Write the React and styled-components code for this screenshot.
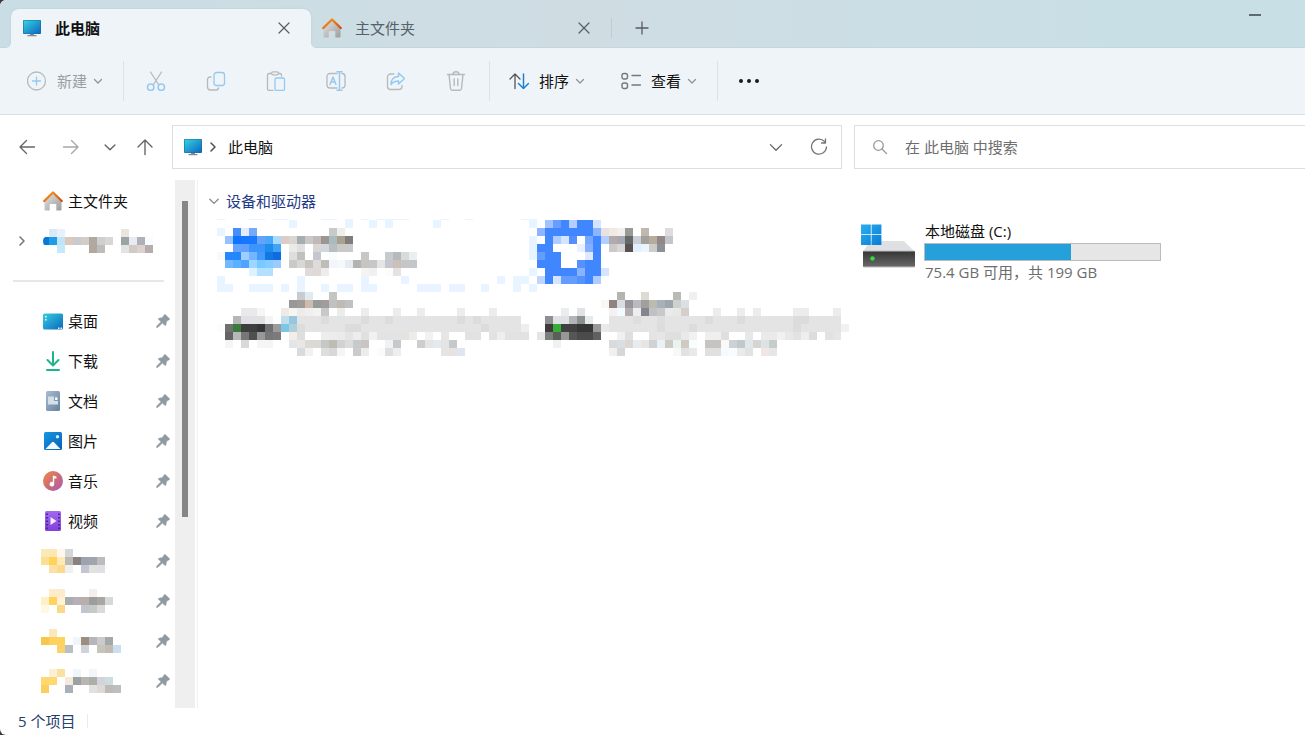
import React from 'react'
import styled, { createGlobalStyle } from 'styled-components'

const GlobalStyle = createGlobalStyle`
    * {
        box-sizing: border-box;
    }
    body {
        margin: 0;
        background: #3a3a3a;
        color: #111;
        font-family: "Open Sans", "Noto Sans CJK SC", sans-serif;
        font-size: 15px;
        line-height: 20px;
    }
    button, input {
        font: inherit;
        color: inherit;
        border: 0;
        padding: 0;
        margin: 0;
        background: none;
    }
    svg {
        display: block;
        flex: none;
    }
`;

const Window = styled.div`
    display: flex;
    flex-direction: column;
    min-height: 100vh;
    background: #fff;
    border-radius: 6px 0 0 6px;
    overflow: hidden;
`;

const TitleBar = styled.header`
    display: flex;
    align-items: flex-end;
    height: 48px;
    padding-left: 11px;
    background: linear-gradient(90deg, #c9dde4, #cfdde3 45%, #c9dfe6 85%);
    box-shadow: inset 0 -1px #c3d6de;
`;

const Tab = styled.div`
    position: relative;
    display: flex;
    align-items: center;
    width: 300px;
    height: 39px;
    padding: 0 21px 2px 11px;
    border-radius: 8px 8px 0 0;
    color: ${p => p.$active ? '#111' : '#55606a'};
    font-weight: ${p => p.$active ? 700 : 400};
    background: ${p => p.$active ? '#eff4f8' : 'transparent'};
    box-shadow: ${p => p.$active ? '0 0 2px #b4cad4' : 'none'};
    clip-path: inset(-3px -4px 0 -4px);
    &::before, &::after {
        content: ${p => p.$active ? '""' : 'none'};
        position: absolute;
        bottom: 0;
        width: 4px;
        height: 4px;
    }
    &::before {
        left: -4px;
        background: radial-gradient(circle at 0 0, transparent 3px, #eff4f8 4px);
    }
    &::after {
        right: -4px;
        background: radial-gradient(circle at 100% 0, transparent 3px, #eff4f8 4px);
    }
`;

const TabName = styled.span`
    flex: 1;
    margin-left: 13px;
`;

const IconButton = styled.button`
    display: flex;
    flex: none;
    align-items: center;
    justify-content: center;
    width: ${p => p.$width || 12}px;
    height: ${p => p.$height || 24}px;
`;

const TabDivider = styled.span`
    width: 1px;
    height: 20px;
    margin-bottom: 10px;
    background: #bccdd4;
`;

const NewTab = styled(IconButton)`
    width: 60px;
    height: 39px;
    padding-bottom: 2px;
`;

const Minimize = styled(IconButton)`
    align-self: flex-start;
    width: 46px;
    height: 30px;
    margin-left: auto;
    margin-right: 27px;
`;

const Toolbar = styled.div`
    display: flex;
    align-items: center;
    height: 67px;
    padding-left: 27px;
    background: #eff4f8;
    border-bottom: 1px solid #d7e1e7;
`;

const Command = styled.button`
    display: flex;
    align-items: center;
    height: 40px;
    margin-right: ${p => p.$after}px;
    color: ${p => p.disabled ? '#9a9fa3' : '#111'};
`;

const CommandName = styled.span`
    margin: 0 6px 0 10px;
`;

const EditCommands = styled.div`
    display: flex;
    margin-right: 3px;
`;

const Divider = styled.span`
    width: 1px;
    height: 40px;
    margin-right: ${p => p.$after}px;
    background: #dde2e6;
`;

const AddressRow = styled.div`
    display: grid;
    grid-template-columns: 160px minmax(0, 670fr) minmax(0, 451fr);
    column-gap: 12px;
    align-items: center;
    height: 64px;
`;

const Nav = styled.nav`
    display: flex;
    padding-left: 7px;
`;

const AddressBox = styled.div`
    display: flex;
    align-items: center;
    height: 44px;
    padding: 0 12px 0 10px;
    border: 1px solid #dedede;
`;

const Crumb = styled.button`
    flex: 1;
    margin-left: 5px;
    text-align: left;
`;

const SearchBox = styled.label`
    display: flex;
    align-items: center;
    height: 44px;
    padding-left: 17px;
    border: 1px solid #dedede;
    border-right: 0;
`;

const SearchInput = styled.input`
    flex: 1;
    min-width: 0;
    margin-left: 17px;
    outline: 0;
    &::placeholder {
        color: #6e6e6e;
        opacity: 1;
    }
`;

const Main = styled.div`
    display: flex;
    flex: 1;
    padding-top: 1px;
`;

const Sidebar = styled.aside`
    width: 175px;
`;

const PlaceList = styled.ul`
    list-style: none;
    margin: 0;
    padding: 1px 0 0;
`;

const Place = styled.a`
    display: flex;
    align-items: center;
    height: 40px;
    padding: 0 5px 0 16px;
    color: #111;
    text-decoration: none;
`;

const Expander = styled.span`
    width: 25px;
`;

const PlaceIcon = styled.span`
    display: flex;
    justify-content: center;
    width: 24px;
    margin-right: 3px;
`;

const PlaceName = styled.span`
    flex: 1;
    padding-bottom: 1px;
`;

const Rule = styled.hr`
    height: 2px;
    margin: 19px 11px 18px 13px;
    border: 0;
    background: #e7e7e7;
`;

const ScrollTrack = styled.div`
    width: 20px;
    padding: 21px 7px 0;
    background: #efefef;
`;

const ScrollThumb = styled.div`
    height: 316px;
    background: #868686;
`;

const Content = styled.main`
    flex: 1;
    min-width: 0;
    margin-left: 2px;
    padding-left: 19px;
    border-left: 1px solid #f1f1f1;
`;

const GroupTitle = styled.button`
    display: flex;
    align-items: center;
    gap: 6px;
    height: 40px;
    margin-left: -9px;
    padding: 2px 0 0;
    color: #1f3a86;
`;

const Tiles = styled.div`
    display: grid;
    grid-template-columns: repeat(auto-fill, 320px);
`;

const Tile = styled.div`
    display: flex;
    height: 72px;
`;

const Drive = styled(Tile)`
    padding: 2px 16px 0 2px;
`;

const DriveInfo = styled.div`
    flex: 1;
    margin-left: 10px;
`;

const DriveName = styled.div`
    padding-bottom: 3px;
    line-height: 18px;
`;

const Usage = styled.div`
    height: 18px;
    margin: 0 0 2px -1px;
    border: 1px solid #bcbcbc;
    background: #e6e6e6;
`;

const UsageFill = styled.div`
    height: 100%;
    background: #26a0da;
`;

const FreeSpace = styled.div`
    line-height: 18px;
    color: #6d6d6d;
`;

const StatusBar = styled.footer`
    display: flex;
    align-items: center;
    gap: 12px;
    height: 27px;
    padding: 0 0 1px 18px;
    color: #24406b;
`;

const StatusDivider = styled.span`
    width: 1px;
    height: 14px;
    background: #ececec;
`;

const MosaicSvg = styled.svg`
    overflow: visible;
`;

// each row is a list of "column:color" or "first-last:color" cells
const parseRow = (row) => row.split(' ').filter(Boolean).map(cell => {
    const [cols, color] = cell.split(':');
    const [first, last = first] = cols.split('-').map(Number);
    return { x: first, w: last - first + 1, color: '#' + color };
});

function Mosaic({ rows, cols, edge = '' }) {
    return (
        <MosaicSvg width={cols * 8} height={rows.length * 8} viewBox={`0 0 ${cols} ${rows.length}`} shapeRendering="crispEdges" aria-hidden="true">
            {parseRow(edge).map((c, i) => (
                <rect key={'edge-' + i} x={c.x} y="-0.125" width={c.w} height="0.125" fill={c.color} />
            ))}
            {rows.map((row, y) => parseRow(row).map((c, i) => (
                <rect key={y + '-' + i} x={c.x} y={y} width={c.w} height="1" fill={c.color} />
            )))}
        </MosaicSvg>
    );
}

const cloudMosaic = [
    '1:dbe8f5 2:e6f1f9 10:eae5df',
    '1:1f9de6 2:c0e4fa 3:dbc9bc 4:c9cad0 5:d3cccb 6:b1a9a0 7:d0cfcf 8:dbd6d6 10:9ca3a3 11:e7ebf4 12:b0b1b4 13:f8fcff',
    '2:c5e8fb 6:b0a79d 7:bebcbd 10:e3e2e5 11:d2cbc3 12:dad2cf 13:b7adad',
];

const folderMosaics = [
    [
        '0:fce9b9 1:fce6b4 2:fdf7ec 3:d3d6d6',
        '0:fddf90 1:ffd25a 2:ffe9b6 3:bcb9b5 4:898180 5:9da2b0 6:a2a5ab 7:bbbcc0',
        '1:fbe0a8 2:fbda8a 3:f0f0f1 5:c3c6cf 6:e0e2df 7:e0e0e2',
    ],
    [
        '1-2:fceccb 6:f4efea',
        '0:fff0c9 1:ffd35c 2:fff2d6 3:a9adac 4:b5b0b8 5:baaea8 6:9c9d9f 7:aaa7a2 8:d7d8d8',
        '0:fff8e5 2:fbd98a 5:c2c5cb 6:c7c8c8 7:d8dbd8',
    ],
    [
        '1:fbe9bb',
        '0:f8c64a 1-2:ffd25e 4:eff5fa 5:9c8d7e 6:b5b5ba 7:cccbc9 8:a2a9a8',
        '2:fad16b 3:b8bec4 5:d0d3d9 7:c4c5bc 8:c0bcb2 9:cae0f1',
    ],
    [
        '1:fbf0d4 2:fce0a0 4:eff5fa 6:f2f6fb',
        '0-1:ffd870 3:f7e8dc 4:9ba2a1 5:b8b5b2 6:abafa6 7:d4d2dc 8:cddcdf',
        '0:fbcf5e 3:a8b0bc 6:e1e2e0 7:ddd9d6 8:c0bab6 9:bbbfc0',
    ],
];

const cloudEdge = '0:e8f4ff 4-5:e8f4ff 7-8:e8f4ff 13-14:e8f4ff 16:e8f4ff 18:e8f4ff 20-23:e8f4ff 28:e8f4ff 31:e8f4ff 38-39:e8f4ff';

const tileMosaics = {
    cloud: [
        '9:e8f4ff 16:e8f4ff 19:e8f4ff 21:e8f4ff 27:e8f4ff 39:e8f4ff',
        '0:e8f4ff 2:4590f8 3:e2eafc 4:75a9fa 14:cacac9 15:efeee9',
        '1:98c1fd 2:0f74ff 3:1576ff 4:1a78ff 5:66a2f9 6:4aa8f6 7:a9dafe 8:dcccc4 9:d7d6d2 10:a5adb0 11:cac8c6 12:bfbab9 13:9c9591 14:aabbc0 15:aaa090 16:7d7d7c 39:e8f4ff',
        '2:66a4fb 3:62a0fb 4-5:3b96fb 6:1f8cec 7:41a3f5 9:eaeae9 10:e0e0e0 12:dad6d5 13:d3d7db 14:b7bec0 15:c9c9c7 16:c9c9c9 39:e8f4ff',
        '0:f6f9fe 1:2587fb 2:2585fa 3:a0cdff 4:73b6ff 5:439bfb 6:1279e4 7:0c6ce2 9:dedede 10:c0c0bf 12:c5c6d0 14:f8fcfd 18:c8c7c5 21:c8cace 22:b7babd 23:d9dada 24:ecefef 39:e8f4ff',
        '1:73b8ff 2:5bb1ff 3:4fa2ff 4:9ad8ff 5:78c9ff 6:86cdff 7:9acbfb 9:cacac9 10:d8d8d7 11:c9c4c0 12:dedcda 13:c0bcb8 14:f2f6fa 15:f6f9fb 16:e6ebf1 17:b3b3b3 18:c6c5c2 19:c7c7ca 20:e5e6e4 21:c4c7d0 22:cbc1b9 23:c7c6c6 24:c5c6ca',
        '4:def1ff 5-6:b4e0ff 11:dedbda 12:dfdad9 13:efedeb 18:f4f4f3 19:f1f0ee 21:fcfcfb 22:e3e3e3 39:e8f4ff',
        '0:e8f4ff 10:e8f4ff 18:e8f4ff 23:e8f4ff 35:e8f4ff 37-38:e8f4ff',
        '0-1:e8f4ff 4-6:e8f4ff 8:e8f4ff 10:e8f4ff 13:e8f4ff 15-16:e8f4ff 18-19:e8f4ff 25-27:e8f4ff 29-30:e8f4ff 33:e8f4ff 37:e8f4ff 39:e8f4ff',
    ],
    badge: [
        '1:a0c2ff 2:669dff 3:3f86ff 4:b4ceff 5-6:3f86ff 7:d6e3ff',
        '0:8bb5ff 1-6:3f86ff 7:8cb5ff 8:eae2e0 9:efeae6 10:f3efec 11:999a95 13:c1b8ad 16:dddde0',
        '1:3f86ff 2:b0ccff 3:d6e5ff 4:558fff 6:78a7ff 7:3f86ff 8:b0ceff 9:b5aaa5 10:a5a8b2 11:666865 12:cbd0d6 13:a39f9d 14:b5ac9c 15:918989 16:c3c6ca',
        '0-1:3f86ff 5:e9f0ff 6:85afff 7:3f86ff 9:cacaca 10:d8d7d5 11:59504f 12:e0f0ff 13:ebf5fd 14:cccdca 15:8d9197',
        '0:659dff 1-2:3f86ff 6:dfe9ff 7:3f86ff',
        '0-2:3f86ff 5:5890ff 6-7:3f86ff',
        '1-4:3f86ff 5:89b3ff 6-7:3f86ff 8:d5e4ff',
        '0:bed5ff 1:3f86ff 2:d6e4ff 3-4:659dff 5:5591ff 6:3f86ff 7:b0ccff',
    ],
    driveA: [
        '10:cacbce 11:e2eaf1 14:c4c6c1',
        '9:989898 10:9e9b98 11:cdbcae 12:959a9a 13:a19c9b 14:c0c2c1 15:c1b9b4 16:bfc1c3',
        '3-4:e9e9ea 5:f6f6f6 8:efeae6 9:f7f4f2 10:ececec 11:f0efed 12:f3f3f3 13:c7c8ca 15:ececec 18:ececec 22:ececec 25:ececec 30:ececec 34:ececec',
        '2:b6b7b9 3-5:e0e1e5 6:f3f5f4 8:c1dfea 9:97c7de 10-37:e4e4e4 13:dcdcdc 18:dcdcdc 21:dcdcdc 30:dcdcdc 32:dcdcdc',
        '0:fcfcfc 1:707070 2:3a7a3c 3-4:3e3e3e 5:363636 6:6f7071 7:9c9c9d 8:7cc6e6 9:aed0dc 10-37:e4e4e4 10:dcdcdc 16-17:dcdcdc 33:dcdcdc 38:eeeeee',
        '1:646464 2:b8b8b8 3:777777 4:4f4f4f 5:989898 6:777777 7:7b7b7b 9:f3efe8 10:dedede 13:eeedec 14:ececea 15:ebebeb 16:e6e4e3 17:ededed 18:e0e0e0 19:f1f1f1 20-23:e3e3e3 24:f0ebe6 26:f2f2f2 28:e8e6e4 31-32:e2e2e2 34:e2e2e2 35:eeeeee 36-38:e2e2e2',
        '1:f5f5f5 3:d9d9d9 5-6:f5f5f5 9:e2e6ea 10:e9e6e3 11:dcdad8 12:dcd8d3 13:c5c7c9 14:bfbcb4 15:cfd3d5 16:dcdcda 17:c7cacd 18:cac4c2 21:f2f2f2 22:c5c9ca 25:cccdce 26:e5e5e5 27:e4e8ef 28:e5e4e2 29:c4c9c9',
        '10:d8dadd 11:f3f1ef 13:dedede 14:d8d8d8 15:f5f5f5 17:c9cbce 18:ececec 20:f8fcff 21:dedfe2 22:eeeeee 28-29:e6e4e1 30:e0e6ef',
    ],
    driveB: [
        '10:b3b4b0 13:dedbd5 17:b8bab6 19:f0f0f0',
        '8:fcf6f2 9:908280 10:d9dce2 11:9a959b 12:babac0 13:a0a09c 14:bfbab0 15:a9b0bb 16:9ba6ae 17:d0d0cd 18:dbe0e4',
        '3:ebeced 5:e1e2e5 9:f5f0f2 10:f2fbff 11:b3acb0 12:eeeeee 13:85868d 14:bfc1c5 15:c8c8c8 16:eaeaea 17:e8e8e8 18:d4cfcb 22:ececec 25:ececec 27:ececec 32-33:ececec 37:ececec',
        '1:8e8f91 2-3:dfe1e6 4:b3b4b7 5:8d8e90 6:e7eaeb 9-37:e4e4e4 12:dedede 15:dedede 21:dcdcdc 25:dcdcdc 32-33:dcdcdc',
        '1:3b3b3b 2:37ac38 3-4:404040 5-6:363636 7:989898 8:e9e9e9 9-37:e4e4e4 15:dcdcdc 19:dcdcdc 32:dcdcdc 38:f1f1f1',
        '0:e3e4e5 1:7d7d7d 2:586057 3:979797 4:565656 5-6:4b4b4b 7:606060 10:f2f0ee 11:dfdfdf 14:e6e3e1 15:e8e5e2 16-17:dfdfdf 18:e9e9e9 19:f1f1f1 21-22:efefef 23:dfdfdf 26:e8e8e8 28-29:eaeaea 30:f1f1f1 31:e8e8e8 32:e2e2e2 33:eeeeee 34:dcdcdc 36:e2e2e2 37:e6e6e6',
        '2:f1f1f1 9:d8dadc 10:d9dfe4 11:dbd8d4 12:e6ecf0 13:e8e6e5 14:d0d3d5 15:e9f2f7 16:cccbc4 17:e9f4f1 18:cfcbc2 19:f6fffe 21-22:c5c4c3 23:fbf9f7 24:cbd2d6 25:c2c7c9 26:e0e7eb 27:d6d5d2 28:dde2e5 29:c6cccc',
        '9:f2f0ee 10:d6d7d8 17:f8f8f8 18:e2e2e2 19:e9e9e9 21-22:e0e0e0 23:f6fafd 24:f8fbff 25:e7ebeb 26:e2e2e2 28:efe7e3 29:e6e6e6',
    ],
};

// line icons
function Line({ size = 20, color = '#8d9296', width = 1.3, children }) {
    return (
        <svg width={size} height={size} viewBox={`0 0 ${size} ${size}`} fill="none" stroke={color} strokeWidth={width} strokeLinecap="round" strokeLinejoin="round" aria-hidden="true">
            {children}
        </svg>
    );
}

const GREY = '#b6babc';
const BLUE = '#96c9ef';

const ChevronDown = ({ size = 10, color = '#8f9396', width }) => (
    <Line size={size} color={color} width={width}>
        <path d={`M${size * 0.15} ${size * 0.35}L${size / 2} ${size * 0.7}L${size * 0.85} ${size * 0.35}`} />
    </Line>
);
const ChevronRight = ({ color = '#6f6f6f', width = 1.6 }) => <Line size={12} color={color} width={width}><path d="M4 2l4 4-4 4" /></Line>;
const CloseIcon = () => <Line size={12} color="#565d62" width={1.2}><path d="M1 1l10 10M11 1L1 11" /></Line>;
const PlusIcon = () => <Line size={14} color="#565d62"><path d="M7 1v12M1 7h12" /></Line>;
const NewIcon = () => <Line color={GREY}><circle cx="9.500" cy="10" r="9" /><path stroke={BLUE} d="M9.500 6v8M5.500 10h8" /></Line>;
const CutIcon = () => (
    <Line color={GREY}>
        <path d="M4.500 1L12.500 13.500M15.500 1L7.500 13.500" />
        <g stroke={BLUE} strokeWidth="1.5"><circle cx="4.700" cy="16.200" r="3.200" /><circle cx="15.300" cy="16.200" r="3.200" /></g>
    </Line>
);
const CopyIcon = () => (
    <Line color={GREY}>
        <path d="M5 6H4a2.500 2.500 0 0 0-2.500 2.500V16A3 3 0 0 0 4.500 19H10a2.500 2.500 0 0 0 2.500-2" />
        <rect stroke={BLUE} x="8" y="1.500" width="10.500" height="13" rx="2.500" />
    </Line>
);
const PasteIcon = () => (
    <Line color={GREY}>
        <path d="M5.500 2.500H3.200A1.700 1.700 0 0 0 1.500 4.200v13.600a1.700 1.700 0 0 0 1.700 1.700H7M12.500 2.500h1.300a1.700 1.700 0 0 1 1.700 1.700V5" />
        <rect x="5.500" y="0.800" width="7" height="3" rx="1.500" />
        <rect stroke={BLUE} x="9" y="7" width="9.500" height="12.400" rx="1.500" />
    </Line>
);
const RenameIcon = () => (
    <Line color={GREY}>
        <path d="M11 2.500H4A3 3 0 0 0 1 5.500v8.500a3 3 0 0 0 3 3h7M16 2.500a3 3 0 0 1 3 3v8.500a3 3 0 0 1-3 3" />
        <path stroke={BLUE} strokeWidth="1.5" d="M4 13.500L7 6l3 7.500M5 11h4M13.500 0.800v18.400M11 0.800h5M11 19.200h5" />
    </Line>
);
const ShareIcon = () => (
    <Line color={GREY}>
        <path d="M8 3H4.500a3 3 0 0 0-3 3v9.500a3 3 0 0 0 3 3H13a3 3 0 0 0 3-3v-1" />
        <path stroke={BLUE} strokeWidth="1.500" d="M12.500 2l6 5.500-6 5.500v-3c-3.500 0-5.500 1-7.500 3.500 0-5 3-8 7.500-8z" />
    </Line>
);
const TrashIcon = () => (
    <Line color={GREY} width={1.4}>
        <path d="M1.500 3.500h17M7 3.500a3 2.700 0 0 1 6 0M3 3.500l1.500 14a2 2 0 0 0 2 1.700h7a2 2 0 0 0 2-1.700l1.500-14M8.200 8v6.500M11.800 8v6.500" />
    </Line>
);
const SortIcon = () => (
    <Line color="#555" width={1.3}>
        <path d="M6 17.500V3M1 8l5-5 5 5" />
        <path stroke="#1c80d4" strokeWidth="1.500" d="M14.500 3v14.500M9.500 12.500l5 5 5-5" />
    </Line>
);
const ViewIcon = () => (
    <Line color="#777" width={1.4}>
        <rect x="1" y="2.500" width="5.500" height="5.500" rx="2" /><rect x="1" y="12" width="5.500" height="5.500" rx="2" />
        <path d="M11 4.500h8.500M11 14h8.500" />
    </Line>
);
const MoreIcon = () => (
    <svg width="22" height="6" viewBox="0 0 22 6" fill="#1a1a1a" aria-hidden="true">
        <circle cx="3" cy="3" r="2" /><circle cx="11" cy="3" r="2" /><circle cx="19" cy="3" r="2" />
    </svg>
);
const BackIcon = () => <Line size={18} color="#666" width={1.4}><path d="M16.500 9H2M8.500 2.500L2 9l6.500 6.500" /></Line>;
const ForwardIcon = () => <Line size={18} color="#a8a8a8" width={1.4}><path d="M1.500 9H16M9.500 2.500L16 9l-6.500 6.500" /></Line>;
const UpIcon = () => <Line size={18} color="#666" width={1.4}><path d="M9 16.500V2M2 9l7-7 7 7" /></Line>;
const RefreshIcon = () => <Line size={18} color="#777"><path d="M14.500 3.500A7.500 7.500 0 1 0 16.500 9M15.500 1v4h-4" /></Line>;
const SearchIcon = () => <Line size={16} color="#999"><circle cx="6.500" cy="6.500" r="4.800" /><path d="M10 10l4.500 4.500" /></Line>;

// colour icons
const PcIcon = () => (
    <svg width="20" height="18" viewBox="0 0 20 18" aria-hidden="true">
        <defs><linearGradient id="pc" x1="0" y1="0" x2="1" y2="1"><stop stopColor="#34d3e0" /><stop offset="1" stopColor="#0d66c0" /></linearGradient></defs>
        <path d="M8 14h4v2h2.500v1.200h-9V16H8z" fill="#7f8a92" />
        <rect x="1" y="1" width="18" height="14" rx="1" fill="#1a6c9c" />
        <rect x="1.600" y="1.600" width="16.800" height="12.800" rx="0.500" fill="url(#pc)" />
    </svg>
);
const HomeIcon = () => (
    <svg width="20" height="20" viewBox="0 0 20 20" aria-hidden="true">
        <defs>
            <linearGradient id="wall" x1="0" y1="0" x2="1" y2="1"><stop stopColor="#e2e2e2" /><stop offset="1" stopColor="#9c9c9c" /></linearGradient>
            <linearGradient id="roof" x1="0" y1="0" x2="1" y2="1"><stop stopColor="#f59b20" /><stop offset="1" stopColor="#d64e10" /></linearGradient>
        </defs>
        <path d="M10 3L1.500 11v7.500a1 1 0 0 0 1 1h4.200V14a1 1 0 0 1 1-1h4.600a1 1 0 0 1 1 1v5.500h4.200a1 1 0 0 0 1-1V11z" fill="url(#wall)" />
        <path d="M1.300 10L10 1.500l8.700 8.500" fill="none" stroke="url(#roof)" strokeWidth="2.400" strokeLinecap="round" strokeLinejoin="round" />
    </svg>
);
const DesktopIcon = () => (
    <svg width="20" height="17" viewBox="0 0 20 17" aria-hidden="true">
        <defs><linearGradient id="desk" x1="0" y1="0" x2="1" y2="1"><stop stopColor="#35d0e0" /><stop offset="1" stopColor="#0b66bd" /></linearGradient></defs>
        <rect y="0.500" width="20" height="16" rx="1.500" fill="url(#desk)" />
        <path d="M2 3h1.600v1.600H2zM2 6h1.600v1.600H2zM15 14.500h1.500V16H15zM17.500 14.500H19V16h-1.500z" fill="#e6fbff" />
    </svg>
);
const DownloadIcon = () => (
    <svg width="16" height="22" viewBox="0 0 16 22" fill="none" stroke="#1eb48a" strokeWidth="2" strokeLinecap="round" strokeLinejoin="round" aria-hidden="true">
        <path d="M8 2v13M2.500 10L8 15.500l5.500-5.500" /><path d="M2 20h12" />
    </svg>
);
const DocumentIcon = () => (
    <svg width="16" height="22" viewBox="0 0 16 22" aria-hidden="true">
        <defs><linearGradient id="doc" x1="0" y1="0" x2="1" y2="1"><stop stopColor="#a9bdd0" /><stop offset="1" stopColor="#64819e" /></linearGradient></defs>
        <rect x="1" y="1" width="14" height="20" rx="1.500" fill="url(#doc)" />
        <path d="M3 6.500h10v8H3z" fill="#d5dfe8" /><path d="M9 6.500h4V11H9z" fill="#8199b2" /><path d="M10 7.500h2.500V10H10z" fill="#fff" />
    </svg>
);
const PictureIcon = () => (
    <svg width="18" height="18" viewBox="0 0 18 18" aria-hidden="true">
        <defs><linearGradient id="pic" x1="0" y1="0" x2="1" y2="1"><stop stopColor="#1698e0" /><stop offset="1" stopColor="#0760b8" /></linearGradient></defs>
        <rect width="18" height="18" rx="1.500" fill="url(#pic)" />
        <path d="M1.500 17L8 10.200a1.400 1.400 0 0 1 2 0l6.500 6.800z" fill="#f4faff" /><circle cx="13.500" cy="4.800" r="1.700" fill="#d6edff" />
    </svg>
);
const MusicIcon = () => (
    <svg width="20" height="20" viewBox="0 0 20 20" aria-hidden="true">
        <defs><linearGradient id="mus" x1="0" y1="0" x2="1" y2="1"><stop stopColor="#f08a45" /><stop offset="0.5" stopColor="#cf6d72" /><stop offset="1" stopColor="#a55cb8" /></linearGradient></defs>
        <circle cx="10" cy="10" r="10" fill="url(#mus)" />
        <path d="M9.800 4.500l3.600 1v2.300l-2.200-.6v6a2.300 2.300 0 1 1-1.400-2.100z" fill="#fff" />
    </svg>
);
const VideoIcon = () => (
    <svg width="16" height="20" viewBox="0 0 16 20" aria-hidden="true">
        <defs><linearGradient id="vid" x1="0" y1="0" x2="0" y2="1"><stop stopColor="#a368ee" /><stop offset="1" stopColor="#8140dc" /></linearGradient></defs>
        <rect width="16" height="20" rx="1.500" fill="url(#vid)" />
        {[2.5, 6, 9.5, 13, 16.500].map(y => <path key={y} d={`M1.200 ${y}h1.700v1.500H1.200zM13.100 ${y}h1.700v1.500h-1.700z`} fill="#4b1c92" />)}
        <path d="M5.500 6l6 4-6 4z" fill="#f3eafd" />
    </svg>
);
const PinIcon = () => (
    <svg width="14" height="14" viewBox="0 0 14 14" aria-hidden="true">
        <path d="M8.300 0.700a.8.8 0 0 1 1.100 0l3.900 3.800a.8.8 0 0 1-.2 1.300L10.600 7.300 9.900 10.900a.7.7 0 0 1-1.200.3L6.400 9.100 1.700 13.400H.6v-1.100L5 7.700 2.600 5.400a.7.7 0 0 1 .4-1.200L6.500 3.500z" fill="#8f9aa2" stroke="#8f9aa2" strokeWidth="0.500" />
    </svg>
);
const DriveIcon = () => (
    <svg width="56" height="48" viewBox="0 0 56 48" aria-hidden="true">
        <defs>
            <linearGradient id="win" gradientUnits="userSpaceOnUse" x1="2" y1="2" x2="22" y2="23"><stop stopColor="#2bb0ee" /><stop offset="1" stopColor="#0a7bd6" /></linearGradient>
            <linearGradient id="body" x1="0" y1="0" x2="0" y2="1"><stop stopColor="#363636" /><stop offset="1" stopColor="#686868" /></linearGradient>
        </defs>
        <path d="M11 19h34l11 11H4z" fill="#dfe0e4" />
        <rect x="4" y="28.500" width="52" height="17" rx="1" fill="#bdbdbd" />
        <rect x="4" y="29.500" width="52" height="15" fill="url(#body)" />
        <circle cx="13.500" cy="36.500" r="2.200" fill="#36dc3c" />
        <path d="M2 2.500h9.800v9.800H2zM12.600 2.500h9.800v9.800h-9.800zM2 13.100h9.800V23H2zM12.600 13.100h9.800V23h-9.800z" fill="url(#win)" />
    </svg>
);

const pinned = [
    { name: '桌面', Icon: DesktopIcon },
    { name: '下载', Icon: DownloadIcon },
    { name: '文档', Icon: DocumentIcon },
    { name: '图片', Icon: PictureIcon },
    { name: '音乐', Icon: MusicIcon },
    { name: '视频', Icon: VideoIcon },
];

const editIcons = [CutIcon, CopyIcon, PasteIcon, RenameIcon, ShareIcon, TrashIcon];

function Tabs() {
    return (
        <TitleBar>
            <Tab $active>
                <PcIcon />
                <TabName>此电脑</TabName>
                <IconButton><CloseIcon /></IconButton>
            </Tab>
            <Tab>
                <HomeIcon />
                <TabName>主文件夹</TabName>
                <IconButton><CloseIcon /></IconButton>
            </Tab>
            <TabDivider />
            <NewTab><PlusIcon /></NewTab>
            <Minimize>
                <svg width="12" height="2" aria-hidden="true"><path d="M0 1h12" stroke="#5f696e" strokeWidth="2" /></svg>
            </Minimize>
        </TitleBar>
    );
}

function Commands() {
    return (
        <Toolbar>
            <Command disabled $after={20}>
                <NewIcon /><CommandName>新建</CommandName><ChevronDown />
            </Command>
            <Divider $after={2} />
            <EditCommands>
                {editIcons.map((Icon, i) => (
                    <IconButton key={i} disabled $width={60} $height={40}><Icon /></IconButton>
                ))}
            </EditCommands>
            <Divider $after={19} />
            <Command $after={36}>
                <SortIcon /><CommandName>排序</CommandName><ChevronDown />
            </Command>
            <Command $after={20}>
                <ViewIcon /><CommandName>查看</CommandName><ChevronDown />
            </Command>
            <Divider $after={20} />
            <IconButton $width={22} $height={40}><MoreIcon /></IconButton>
        </Toolbar>
    );
}

function Address() {
    return (
        <AddressRow>
            <Nav>
                <IconButton $width={40}><BackIcon /></IconButton>
                <IconButton $width={48}><ForwardIcon /></IconButton>
                <IconButton $width={30}><ChevronDown size={14} color="#666" width={1.4} /></IconButton>
                <IconButton $width={40}><UpIcon /></IconButton>
            </Nav>
            <AddressBox>
                <PcIcon />
                <IconButton $width={20}><ChevronRight color="#555" /></IconButton>
                <Crumb>此电脑</Crumb>
                <IconButton $width={66}><ChevronDown size={16} color="#666" /></IconButton>
                <IconButton $width={20}><RefreshIcon /></IconButton>
            </AddressBox>
            <SearchBox>
                <SearchIcon />
                <SearchInput type="text" placeholder="在 此电脑 中搜索" />
            </SearchBox>
        </AddressRow>
    );
}

function Places() {
    return (
        <Sidebar>
            <PlaceList>
                <li>
                    <Place href="#home">
                        <Expander />
                        <PlaceIcon><HomeIcon /></PlaceIcon>
                        <PlaceName>主文件夹</PlaceName>
                    </Place>
                </li>
                <li>
                    <Place href="#cloud">
                        <Expander><ChevronRight color="#777" /></Expander>
                        <MosaicSvg width="112" height="24" aria-hidden="true">
                            <path d="M8 8v8H3.500q-1.500-1-1.500-4t2-4z" fill="#0b78d6" />
                            <Mosaic rows={cloudMosaic} cols={14} />
                        </MosaicSvg>
                    </Place>
                </li>
            </PlaceList>
            <Rule />
            <PlaceList>
                {pinned.map(({ name, Icon }) => (
                    <li key={name}>
                        <Place href="#place">
                            <Expander />
                            <PlaceIcon><Icon /></PlaceIcon>
                            <PlaceName>{name}</PlaceName>
                            <PinIcon />
                        </Place>
                    </li>
                ))}
                {folderMosaics.map((rows, i) => (
                    <li key={i}>
                        <Place href="#folder">
                            <Expander />
                            <PlaceName><Mosaic rows={rows} cols={10} /></PlaceName>
                            <PinIcon />
                        </Place>
                    </li>
                ))}
            </PlaceList>
        </Sidebar>
    );
}

function App() {
    return (
        <>
            <GlobalStyle />
            <Window>
                <Tabs />
                <Commands />
                <Address />
                <Main>
                    <Places />
                    <ScrollTrack><ScrollThumb /></ScrollTrack>
                    <Content>
                        <GroupTitle><ChevronDown size={12} color="#888" />设备和驱动器</GroupTitle>
                        <Tiles>
                            <Tile><Mosaic rows={tileMosaics.cloud} cols={40} edge={cloudEdge} /></Tile>
                            <Tile><Mosaic rows={tileMosaics.badge} cols={40} /></Tile>
                            <Drive>
                                <DriveIcon />
                                <DriveInfo>
                                    <DriveName>本地磁盘 (C:)</DriveName>
                                    <Usage><UsageFill style={{ width: `${(199 - 75.4) / 199 * 100}%` }} /></Usage>
                                    <FreeSpace>75.4 GB 可用，共 199 GB</FreeSpace>
                                </DriveInfo>
                            </Drive>
                            <Tile><Mosaic rows={tileMosaics.driveA} cols={40} /></Tile>
                            <Tile><Mosaic rows={tileMosaics.driveB} cols={40} /></Tile>
                        </Tiles>
                    </Content>
                </Main>
                <StatusBar>
                    <span>5 个项目</span>
                    <StatusDivider />
                </StatusBar>
            </Window>
        </>
    );
}

export default App
